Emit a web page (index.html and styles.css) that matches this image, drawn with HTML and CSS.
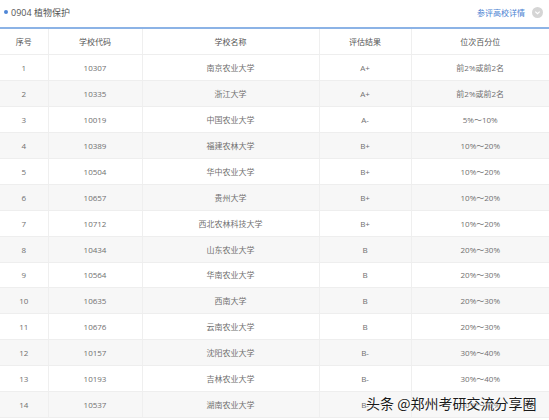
FILE: index.html
```html
<!DOCTYPE html>
<html lang="zh">
<head>
<meta charset="utf-8">
<link rel="stylesheet" href="styles.css">
</head>
<body>
<div class="page">
  <div class="titlebar">
    <div class="title"><span class="dot"></span>0904 植物保护</div>
    <div class="more">
      <span class="link">参评高校详情</span>
      <svg class="toggle" width="11" height="11" viewBox="0 0 11 11"><circle cx="5.5" cy="5.5" r="5.5" fill="#d5d5d5"/><path d="M3.3 4.6 L5.5 6.6 L7.7 4.6" stroke="#fff" stroke-width="1.2" fill="none"/></svg>
    </div>
  </div>
  <table class="grid">
    <colgroup><col class="c1"><col class="c2"><col class="c3"><col class="c4"><col class="c5"></colgroup>
    <thead>
      <tr><th>序号</th><th>学校代码</th><th>学校名称</th><th>评估结果</th><th>位次百分位</th></tr>
    </thead>
    <tbody>
      <tr><td>1</td><td>10307</td><td>南京农业大学</td><td>A+</td><td>前2%或前2名</td></tr>
      <tr><td>2</td><td>10335</td><td>浙江大学</td><td>A+</td><td>前2%或前2名</td></tr>
      <tr><td>3</td><td>10019</td><td>中国农业大学</td><td>A-</td><td>5%～10%</td></tr>
      <tr><td>4</td><td>10389</td><td>福建农林大学</td><td>B+</td><td>10%～20%</td></tr>
      <tr><td>5</td><td>10504</td><td>华中农业大学</td><td>B+</td><td>10%～20%</td></tr>
      <tr><td>6</td><td>10657</td><td>贵州大学</td><td>B+</td><td>10%～20%</td></tr>
      <tr><td>7</td><td>10712</td><td>西北农林科技大学</td><td>B+</td><td>10%～20%</td></tr>
      <tr><td>8</td><td>10434</td><td>山东农业大学</td><td>B</td><td>20%～30%</td></tr>
      <tr><td>9</td><td>10564</td><td>华南农业大学</td><td>B</td><td>20%～30%</td></tr>
      <tr><td>10</td><td>10635</td><td>西南大学</td><td>B</td><td>20%～30%</td></tr>
      <tr><td>11</td><td>10676</td><td>云南农业大学</td><td>B</td><td>20%～30%</td></tr>
      <tr><td>12</td><td>10157</td><td>沈阳农业大学</td><td>B-</td><td>30%～40%</td></tr>
      <tr><td>13</td><td>10193</td><td>吉林农业大学</td><td>B-</td><td>30%～40%</td></tr>
      <tr><td>14</td><td>10537</td><td>湖南农业大学</td><td>B-</td><td>30%～40%</td></tr>
    </tbody>
  </table>
  <div class="watermark">头条 @郑州考研交流分享圈</div>
</div>
</body>
</html>
```
FILE: styles.css
```css
* { box-sizing: border-box; }
html, body { margin: 0; padding: 0; background: #fff; }
body {
  font-family: "Open Sans", "Noto Sans CJK SC", sans-serif;
  color: #707070;
  font-size: 8px;
  overflow: hidden;
  width: 549px;
  height: 420px;
}
.page { position: relative; width: 549px; height: 420px; overflow: hidden; }
.titlebar {
  height: 29px;
  display: flex;
  align-items: center;
  justify-content: space-between;
  padding: 0 6px 3px 4px;
  border-bottom: 2px solid #8cb3e6;
}
.title { display: flex; align-items: center; font-size: 9px; color: #555; }
.dot { width: 4px; height: 4px; border-radius: 50%; background: #4f86d6; margin-right: 3px; }
.more { display: flex; align-items: center; gap: 7px; }
.link { color: #4a82d2; font-size: 8px; }
.toggle { display: block; }
.grid { width: 549px; border-collapse: collapse; table-layout: fixed; }
.c1 { width: 48px; } .c2 { width: 94px; } .c3 { width: 177px; } .c4 { width: 92px; } .c5 { width: 138px; }
th, td {
  height: 25.9px;
  padding: 0;
  text-align: center;
  font-weight: normal;
  border-bottom: 1px solid #eeeeee;
  border-left: 1px solid #efefef;
  white-space: nowrap;
}
th:first-child, td:first-child { border-left: none; }
th { color: #555; font-size: 8px; background: #fff; }
tbody tr:nth-child(even) td { background: #f7f7f7; }
.watermark {
  position: absolute;
  left: 366px;
  top: 393px;
  font-size: 14px;
  white-space: nowrap;
  color: #1a1a1a;
  font-family: "Noto Sans CJK SC", sans-serif;
  line-height: 20px;
  text-shadow: 0 0 2px #fff, 0 0 2px #fff;
}
```
